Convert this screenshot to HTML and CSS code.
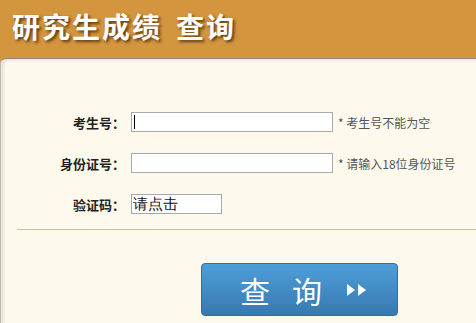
FILE: index.html
```
<!DOCTYPE html>
<html>
<head>
    <meta charset="utf-8">
    <title>研究生成绩查询</title>
    <link rel="stylesheet" href="styles.css">
</head>
<body>
    <div class="header">
        <h1>研究生成绩<span class="gap"></span>查询</h1>
    </div>
    <div class="panel">
        <form class="form">
            <div class="row">
                <label class="label">考生号：</label>
                <span class="field-wrap">
                    <input type="text" class="field">
                    <i class="caret"></i>
                </span>
                <span class="hint">* 考生号不能为空</span>
            </div>
            <div class="row">
                <label class="label">身份证号：</label>
                <input type="text" class="field">
                <span class="hint">* 请输入18位身份证号</span>
            </div>
            <div class="row row-code">
                <label class="label">验证码：</label>
                <input type="text" class="field code" value="请点击">
            </div>
        </form>
        <div class="divider"></div>
        <button type="button" class="submit">
            <span>查</span><span>询</span>
            <svg class="arrows" width="22" height="14" viewBox="0 0 22 14">
                <polygon points="1,1 9,7 1,13" fill="#fff"/>
                <polygon points="12,1 20,7 12,13" fill="#fff"/>
            </svg>
        </button>
    </div>
</body>
</html>
```

FILE: styles.css
```
html, body {
    margin: 0;
    padding: 0;
    background: #d4953f;
    font-family: "Noto Sans CJK SC", "Noto Sans", sans-serif;
}
.header {
    height: 58px;
    background: #d4953f;
    overflow: hidden;
}
.header h1 {
    margin: 0;
    padding: 6px 0 0 12px;
    font-size: 28px;
    line-height: 40px;
    font-weight: bold;
    letter-spacing: 2px;
    color: #fff;
    text-shadow: 2px 2px 3px rgba(60, 30, 0, 0.75);
}
.header .gap {
    display: inline-block;
    width: 14px;
}
.panel {
    height: 265px;
    background: #fdf9ec;
    border-top: 1px solid #8e8a80;
    border-left: 1px solid #bdbab0;
    border-top-left-radius: 6px;
    box-shadow: inset 3px 2px 3px rgba(0, 0, 0, 0.08);
    box-sizing: border-box;
}
.form {
    padding-top: 53px;
}
.row {
    display: flex;
    align-items: center;
    height: 20px;
    margin-bottom: 21px;
}
.row-code {
    margin-top: 2px;
    margin-bottom: 0;
}
.label {
    width: 124px;
    text-align: right;
    font-size: 13px;
    font-weight: bold;
    color: #222;
    margin-right: 6px;
}
.field-wrap {
    position: relative;
    display: flex;
}
.caret {
    position: absolute;
    left: 3px;
    top: 3px;
    width: 1px;
    height: 14px;
    background: #000;
}
.field {
    box-sizing: border-box;
    width: 202px;
    height: 20px;
    border: 1px solid #aaa;
    background: #fff;
    padding: 0 2px;
    font-size: 13px;
    outline: none;
}
.field.code {
    width: 91px;
    font-size: 15px;
    color: #111;
    padding: 0 1px;
}
.hint {
    margin-left: 5px;
    font-size: 12px;
    color: #555;
}
.divider {
    margin: 15px 0 0 16px;
    border-top: 1px solid #c6c198;
}
.submit {
    display: flex;
    align-items: center;
    margin: 33px 0 0 200px;
    width: 197px;
    height: 53px;
    padding: 0 0 0 38px;
    border: 1px solid #3a6c98;
    border-radius: 4px;
    background: linear-gradient(#4d9fd9, #3878b0);
    color: #fff;
    font-family: "Noto Sans CJK SC", sans-serif;
    font-size: 30px;
    box-sizing: border-box;
}
.submit span {
    margin-right: 22px;
}
.submit .arrows {
    margin-left: 2px;
}
```
